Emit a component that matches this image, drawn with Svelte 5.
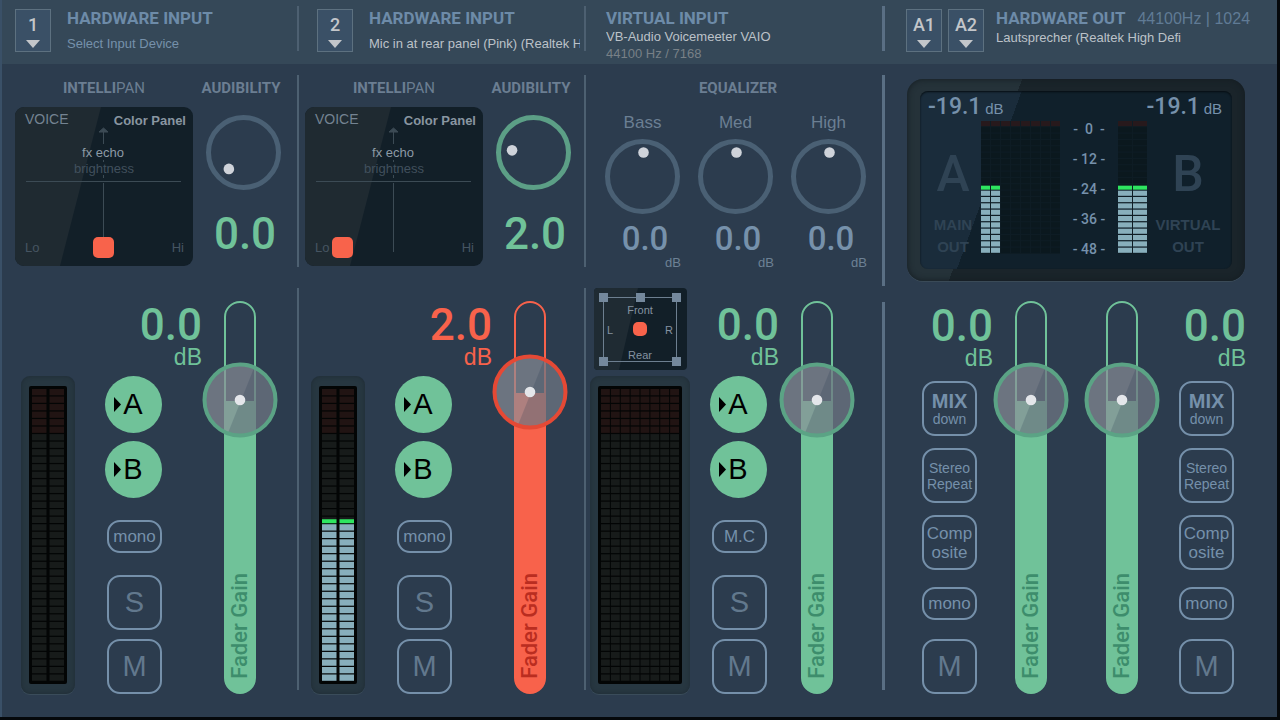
<script>
    const ROW_COUNT = 39;
    const OUT_ROW_COUNT = 21;

    let inputs = $state([
        { id: 1, device: 'Select Input Device', empty: true, audibility: 0, pan_x: 88, gain: 0, peak: -1 },
        { id: 2, device: 'Mic in at rear panel (Pink) (Realtek High Definition Audio)', empty: false, audibility: 2, pan_x: 37, gain: 2, peak: 17 },
    ]);

    let equalizer = $state([
        { name: 'Bass', value: 0 },
        { name: 'Med', value: 0 },
        { name: 'High', value: 0 },
    ]);

    let virtual_input = $state({ gain: 0 });
    let outputs = $state([{ gain: 0 }, { gain: 0 }]);

    const scale = ['-  0  -', '- 12 -', '- 24 -', '- 36 -', '- 48 -'];

    function knob_dot(angle) {
        const rad = (angle * Math.PI) / 180;
        return { x: 38.5 + 22.5 * Math.sin(rad), y: 37 - 23.5 * Math.cos(rad) };
    }

    function fader_top(gain) {
        return 99 - gain * 4;
    }

    function cell_color(row, col, red_rows, peak, lit_cols, dim) {
        if (peak >= 0 && row > peak && col < lit_cols) return '#88afbc';
        if (row < red_rows) return dim ? '#27191c' : '#211413';
        return dim ? '#0b181e' : '#171b1a';
    }
</script>

{#snippet meter(cols, rows, width, height, gap, red_rows, peak, lit_cols, dim)}
    {@const cell_w = (width + gap) / cols}
    {@const cell_h = height / rows}
    <svg class="cells" {width} {height} viewBox="0 0 {width} {height}" aria-hidden="true">
        {#each Array(rows) as _, row}
            {#each Array(cols) as _, col}
                <rect
                    x={col * cell_w}
                    y={row * cell_h}
                    width={cell_w - gap}
                    height={cell_h - 1.2}
                    fill={cell_color(row, col, red_rows, peak, lit_cols, dim)}
                />
                {#if row === peak && col < lit_cols}
                    <rect x={col * cell_w} y={(row + 1) * cell_h - 5} width={cell_w - gap} height="4" fill="#2ee660" />
                {/if}
            {/each}
        {/each}
    </svg>
{/snippet}

{#snippet knob(name, value, angle, min, max, set_value)}
    {@const dot = knob_dot(angle)}
    <div class="knob" class:active={value > 0}>
        <svg width="75" height="75" viewBox="0 0 75 75" aria-hidden="true">
            <circle class="ring" cx="37.5" cy="37.5" r="35" />
            <circle cx={dot.x} cy={dot.y} r="5.3" fill="#cfd3da" />
        </svg>
        <input type="range" aria-label={name} {min} {max} step="0.1" {value} oninput={(e) => set_value(+e.target.value)} />
    </div>
{/snippet}

{#snippet fader(strip, name)}
    {@const top = fader_top(strip.gain)}
    <div class="fader" class:hot={strip.gain > 0}>
        <div class="track" style="--level: {top + 1}px">
            <span class="fader-text">Fader Gain</span>
        </div>
        <svg class="handle" style="top: {top}px" width="76" height="76" viewBox="0 0 76 76" aria-hidden="true">
            <circle cx="38" cy="38" r="35" fill="#8b8f98" fill-opacity="0.68" />
            <path d="M52 6 A35 35 0 0 1 26 71 Z" fill="#24384a" fill-opacity="0.2" />
            <circle class="handle-ring" cx="38" cy="38" r="35.5" />
            <circle cx="38" cy="38" r="5.3" fill="#e4e6ea" />
        </svg>
        <input class="fader-input" type="range" aria-label={name} min="-60" max="12" step="0.1" bind:value={strip.gain} />
    </div>
{/snippet}

{#snippet readout(gain)}
    <div class="readout" class:hot={gain > 0}>
        <div class="gain">{gain.toFixed(1)}</div>
        <div class="unit">dB</div>
    </div>
{/snippet}

{#snippet slot_button(text)}
    <button class="slot">
        {text}
        <svg width="14" height="8" viewBox="0 0 14 8" aria-hidden="true"><path d="M0 0H14L7 8Z" fill="#c3c6ca" /></svg>
    </button>
{/snippet}

{#snippet routing(third)}
    {#each ['A', 'B'] as bus}
        <button class="bus">
            <svg width="7" height="15" viewBox="0 0 7 15" aria-hidden="true"><path d="M0 0L7 7.5L0 15Z" /></svg>{bus}
        </button>
    {/each}
    <button class="pill">{third}</button>
    <button class="square letter">S</button>
    <button class="square letter">M</button>
{/snippet}

{#snippet output_buttons()}
    <button class="square mix"><b>MIX</b>down</button>
    <button class="square stereo">Stereo<br />Repeat</button>
    <button class="square composite">Comp<br />osite</button>
    <button class="pill">mono</button>
    <button class="square letter">M</button>
{/snippet}

<main class="mixer">
    {#each inputs as input (input.id)}
        <section class="strip hardware">
            <header class="head">
                {@render slot_button(input.id)}
                <div class="head-text">
                    <h2>HARDWARE INPUT</h2>
                    <button class="device" class:empty={input.empty}>{input.device}</button>
                </div>
            </header>

            <div class="upper">
                <div class="pan">
                    <h3>INTELLI<span>PAN</span></h3>
                    <svg class="pad" width="178" height="159" viewBox="0 0 178 159">
                        <rect width="178" height="159" rx="9" fill="#121f28" />
                        <path d="M9 0H86L45 159H9A9 9 0 0 1 0 150V9A9 9 0 0 1 9 0Z" fill="#1f2a31" />
                        <g stroke="#3c4b55" fill="none">
                            <path d="M11 74.5H166M88.5 23V37M88.5 53V55M88.5 68V71M88.5 76V145" />
                            <path d="M84 25L88.5 21L93 25Z" fill="#3c4b55" />
                        </g>
                        <text x="10" y="17" font-size="14" fill="#748391">VOICE</text>
                        <text x="171" y="18" font-size="13" font-weight="bold" text-anchor="end" fill="#8996a1">Color Panel</text>
                        <text x="88" y="50" font-size="13" text-anchor="middle" fill="#8c9aa5">fx echo</text>
                        <text x="89" y="66" font-size="13" text-anchor="middle" fill="#41505d">brightness</text>
                        <text x="10" y="145" font-size="13" fill="#465562">Lo</text>
                        <text x="169" y="145" font-size="13" text-anchor="end" fill="#465562">Hi</text>
                        <rect x={input.pan_x - 10} y="130" width="21" height="21" rx="5" fill="#f8634b" />
                    </svg>
                </div>
                <div class="audibility">
                    <h3>AUDIBILITY</h3>
                    {@render knob('Audibility', input.audibility, -136 + input.audibility * 25, 0, 10, (v) => (input.audibility = v))}
                    <div class="audibility-value">{input.audibility.toFixed(1)}</div>
                </div>
            </div>

            <div class="lower">
                <div class="meter">
                    <div class="meter-screen">
                        {@render meter(2, ROW_COUNT, 32, 293, 3, 6, input.peak, 2, false)}
                    </div>
                </div>
                <div class="controls">
                    {@render readout(input.gain)}
                    {@render routing('mono')}
                </div>
                {@render fader(input, 'Input gain')}
            </div>
        </section>
    {/each}

    <section class="strip virtual">
        <header class="head">
            <div class="head-text">
                <h2>VIRTUAL INPUT</h2>
                <p class="device">VB-Audio Voicemeeter VAIO</p>
                <p class="rate">44100 Hz / 7168</p>
            </div>
        </header>

        <div class="upper eq">
            <h3>EQUALIZER</h3>
            <div class="bands">
                {#each equalizer as band}
                    <div class="band">
                        <span class="band-name">{band.name}</span>
                        {@render knob(band.name, band.value, band.value * 11, -12, 12, (v) => (band.value = v))}
                        <div class="band-value">{band.value.toFixed(1)}</div>
                        <div class="band-unit">dB</div>
                    </div>
                {/each}
            </div>
        </div>

        <div class="lower">
            <div class="surround">
                <svg class="surround-pad" width="93" height="82" viewBox="0 0 93 82">
                    <rect width="93" height="82" rx="4" fill="#121f28" />
                    <path d="M4 0H44L25 82H4A4 4 0 0 1 0 78V4A4 4 0 0 1 4 0Z" fill="#1f2b33" />
                    <rect x="9.5" y="9.5" width="73" height="64" fill="none" stroke="#6d7f90" />
                    <path d="M5 5h9v9h-9zM42 5h9v9h-9zM78 5h9v9h-9zM5 69h9v9h-9zM78 69h9v9h-9z" fill="#74889c" />
                    <g font-size="11" fill="#8492a0" text-anchor="middle">
                        <text x="46" y="26">Front</text>
                        <text x="16" y="46">L</text>
                        <text x="75" y="46">R</text>
                        <text x="46" y="71">Rear</text>
                    </g>
                    <rect x="39" y="34" width="14" height="14" rx="5" fill="#f8634b" />
                </svg>
                <div class="meter wide">
                    <div class="meter-screen">
                        {@render meter(8, ROW_COUNT, 78, 293, 1, 6, -1, 0, false)}
                    </div>
                </div>
            </div>
            <div class="controls">
                {@render readout(virtual_input.gain)}
                {@render routing('M.C')}
            </div>
            {@render fader(virtual_input, 'Virtual input gain')}
        </div>
    </section>

    <section class="strip out">
        <header class="head">
            {@render slot_button('A1')}
            {@render slot_button('A2')}
            <div class="head-text">
                <h2>HARDWARE OUT <span>44100Hz | 1024</span></h2>
                <button class="device">Lautsprecher (Realtek High Defi</button>
            </div>
        </header>

        <div class="display">
            <div class="screen">
                <div class="levels">
                    <div>-19.1 <small>dB</small></div>
                    <div>-19.1 <small>dB</small></div>
                </div>
                <div class="busses">
                    <div class="bus-name"><strong>A</strong>MAIN<br />OUT</div>
                    {@render meter(8, OUT_ROW_COUNT, 79, 133, 1, 1, 10, 2, true)}
                    <div class="scale">
                        {#each scale as mark}<div>{mark}</div>{/each}
                    </div>
                    {@render meter(2, OUT_ROW_COUNT, 29, 133, 1, 1, 10, 2, true)}
                    <div class="bus-name"><strong>B</strong>VIRTUAL<br />OUT</div>
                </div>
            </div>
        </div>

        <div class="lower">
            <div class="controls">
                {@render readout(outputs[0].gain)}
                {@render output_buttons()}
            </div>
            {@render fader(outputs[0], 'Main out gain')}
            {@render fader(outputs[1], 'Virtual out gain')}
            <div class="controls right">
                {@render readout(outputs[1].gain)}
                {@render output_buttons()}
            </div>
        </div>
    </section>
</main>

<style>
    :global(body) {
        margin: 0;
        background: #05080b;
    }

    .mixer {
        --green: #70c299;
        --red: #f8624b;
        --blue: #7691ab;
        display: grid;
        grid-template-columns: 299fr 287fr 299fr 392fr;
        min-width: 1200px;
        margin: 0 3px 3px 0;
        background: linear-gradient(#354858 0 64px, #2c3c4e 64px);
        box-shadow: inset 2px 0 #3a5067;
        font-family: 'Liberation Sans', Arial, sans-serif;
        color: var(--blue);
    }

    .strip {
        position: relative;
        min-width: 0;
        padding-left: 15px;
    }

    .strip:nth-child(2) {
        padding-left: 6px;
    }

    .strip:not(.out)::after {
        content: '';
        position: absolute;
        top: 0;
        bottom: 0;
        right: 0;
        width: 2px;
        background: linear-gradient(
            transparent 6px,
            #4d6071 6px 51px,
            transparent 51px 75px,
            #4d6071 75px 267px,
            transparent 267px 288px,
            #4d6071 288px 690px,
            transparent 690px
        );
    }

    .strip.virtual::after {
        width: 3px;
        background: linear-gradient(
            transparent 6px,
            #5a6f84 6px 51px,
            transparent 51px 75px,
            #5a6f84 75px 286px,
            transparent 286px 302px,
            #5a6f84 302px 690px,
            transparent 690px
        );
    }

    button {
        padding: 0;
        border: 0;
        background: none;
        color: inherit;
        font-family: inherit;
        cursor: pointer;
    }

    h2,
    h3,
    p {
        margin: 0;
    }

    h2 {
        font: bold 17px/20px Roboto, sans-serif;
        color: #6d8ba8;
        white-space: nowrap;
    }

    h2 span {
        margin-left: 8px;
        font: 16px/20px 'Liberation Sans', Arial, sans-serif;
        color: #607b95;
    }

    h3 {
        font: bold 15px/20px Roboto, sans-serif;
        color: #6b7e92;
        text-align: center;
    }

    h3 span {
        font-weight: 400;
    }

    /* header */
    .head {
        display: flex;
        gap: 6px;
        height: 55px;
        padding-top: 9px;
    }

    .hardware .head {
        gap: 16px;
    }

    .strip:nth-child(2) .head {
        padding-left: 12px;
    }

    .slot {
        display: flex;
        flex-direction: column;
        align-items: center;
        gap: 3px;
        flex: none;
        box-sizing: border-box;
        width: 36px;
        height: 43px;
        padding-top: 3px;
        border: 1px solid #5d7180;
        background: #3a5066;
        font: 500 18px/24px Roboto, sans-serif;
        color: #c3c6ca;
    }

    .head-text {
        min-width: 0;
        margin: -1px 6px 0 0;
    }

    .device {
        display: block;
        max-width: 100%;
        overflow: hidden;
        font-size: 13px;
        line-height: 18px;
        color: #bcc2c8;
        text-align: left;
        white-space: nowrap;
    }

    .hardware .device {
        margin-top: 7px;
    }

    .device.empty {
        color: #7691ab;
    }

    .rate {
        font-size: 13px;
        line-height: 16px;
        color: #788087;
    }

    /* upper part */
    .upper {
        display: flex;
        gap: 8px;
        height: 208px;
        padding-top: 14px;
    }

    .pad,
    .surround-pad,
    .cells,
    .knob svg {
        display: block;
    }

    .pad {
        margin-top: 9px;
    }

    .audibility {
        display: flex;
        flex-direction: column;
        align-items: center;
        width: 84px;
    }

    .audibility h3 {
        margin-right: 4px;
    }

    .audibility .knob {
        margin-top: 17px;
    }

    .audibility-value,
    .gain {
        font: 500 44px/48px Roboto, sans-serif;
        color: var(--green);
    }

    .audibility-value {
        margin: 20px 0 0 4px;
    }

    .knob {
        position: relative;
        width: 75px;
        height: 75px;
    }

    .ring {
        fill: none;
        stroke: #4a6074;
        stroke-width: 5;
    }

    .knob.active .ring {
        stroke: #5c9f86;
    }

    .knob input,
    .fader-input {
        position: absolute;
        inset: 0;
        width: 100%;
        height: 100%;
        margin: 0;
        opacity: 0;
        cursor: pointer;
    }

    .virtual {
        padding-left: 0;
    }

    .virtual .head {
        padding-left: 20px;
    }

    .eq {
        flex-direction: column;
    }

    .eq h3 {
        padding-left: 5px;
    }

    .bands {
        display: flex;
        gap: 18px;
        padding-left: 19px;
        margin-top: 6px;
    }

    .band {
        display: flex;
        flex-direction: column;
        align-items: center;
        width: 75px;
    }

    .band-name {
        font-size: 17px;
        line-height: 22px;
        color: #6b7f93;
    }

    .band .knob {
        margin-top: 5px;
    }

    .band-value {
        margin: 7px 0 0 5px;
        font: 500 33px/36px Roboto, sans-serif;
    }

    .band-unit {
        align-self: flex-end;
        margin-right: -1px;
        font-size: 13px;
        line-height: 12px;
        color: #6d8195;
    }

    /* lower part */
    .lower {
        display: flex;
        align-items: flex-end;
        height: 408px;
        padding-bottom: 23px;
    }

    .meter {
        box-sizing: border-box;
        width: 54px;
        height: 318px;
        margin-left: 6px;
        padding: 10px 8px;
        border-radius: 9px;
        background: #273741;
        box-shadow: inset 0 0 4px #1f2b34, 0 1px #3a4c5a;
    }

    .meter-screen {
        display: flex;
        justify-content: center;
        height: 295px;
        padding-top: 3px;
        border-radius: 2px;
        background: #030505;
    }

    .meter.wide {
        width: 100px;
        margin: 6px 0 0;
    }

    .surround {
        margin-left: 4px;
    }

    .surround-pad {
        margin-left: 4px;
    }

    .controls {
        --inset: 40px;
        display: flex;
        flex-direction: column;
        align-items: flex-end;
        width: 127px;
        padding-right: 1px;
    }

    .controls > button {
        margin-right: var(--inset);
    }

    .virtual .controls {
        --inset: 12px;
        width: 89px;
    }

    .readout {
        height: 75px;
        text-align: right;
        color: var(--green);
    }

    .gain {
        color: inherit;
    }

    .unit {
        font-size: 23px;
        line-height: 16px;
    }

    .hot {
        color: var(--red);
    }

    .bus {
        display: flex;
        align-items: center;
        justify-content: center;
        gap: 2px;
        box-sizing: border-box;
        width: 57px;
        height: 57px;
        margin-bottom: 8px;
        padding-right: 10px;
        border-radius: 50%;
        background: var(--green);
        font-size: 29px;
        color: #000;
    }

    .pill,
    .square {
        box-sizing: border-box;
        width: 55px;
        border: 2px solid #7590aa;
        border-radius: 13px;
        color: #7590aa;
    }

    .pill {
        height: 33px;
        margin-top: 14px;
        font-size: 17px;
        line-height: 26px;
    }

    .square {
        height: 55px;
        margin-top: 9px;
    }

    .pill + .square {
        margin-top: 22px;
    }

    .letter {
        font-size: 29px;
        color: #62788d;
    }

    .fader {
        --tone: var(--green);
        --ring: #5ba385;
        --label: #3d8d6c;
        position: relative;
        width: 74px;
        height: 393px;
    }

    .fader.hot {
        --tone: var(--red);
        --ring: #e54935;
        --label: #ba2d20;
    }

    .track {
        display: flex;
        align-items: flex-end;
        justify-content: center;
        box-sizing: border-box;
        width: 32px;
        height: 100%;
        margin: 0 auto;
        padding-bottom: 13px;
        border: 2px solid var(--tone);
        border-radius: 16px;
        background: linear-gradient(transparent var(--level), var(--tone) var(--level)) border-box;
    }

    .fader-text {
        font: 500 22px/24px Roboto, sans-serif;
        color: var(--label);
        writing-mode: vertical-rl;
        transform: rotate(180deg);
    }

    .handle {
        position: absolute;
        left: -1px;
        margin-top: -38px;
    }

    .handle-ring {
        fill: none;
        stroke: var(--ring);
        stroke-width: 4;
    }

    .fader-input {
        writing-mode: vertical-lr;
        direction: rtl;
    }

    /* outputs */
    .out {
        padding-left: 21px;
    }

    .out .head-text {
        margin-left: 6px;
    }

    .display {
        box-sizing: border-box;
        max-width: 338px;
        height: 202px;
        margin: 15px 0 5px 1px;
        padding: 12px 13px;
        border-radius: 16px;
        background: linear-gradient(110deg, #253239 0 28%, #1a242a 28%);
        box-shadow: inset 0 0 6px #141c21, 0 1px #3a4a57;
    }

    .screen {
        height: 178px;
        border-radius: 8px;
        background: linear-gradient(110deg, #1a2c3b 0 27%, #10202b 27%);
        box-shadow: inset 0 1px 2px #060d12;
    }

    .levels {
        display: flex;
        justify-content: space-between;
        padding: 5px 10px 0 8px;
        font: 500 23px/22px Roboto, sans-serif;
    }

    .levels small {
        margin-left: -2px;
        font: 15px/22px 'Liberation Sans', Arial, sans-serif;
    }

    .busses {
        display: grid;
        grid-template-columns: 56px 79px 58px 29px 1fr;
        padding: 1px 3px 0 5px;
    }

    .busses .cells {
        background: #0e1c24;
    }

    .bus-name {
        padding-top: 26px;
        font-weight: bold;
        font-size: 15px;
        line-height: 22px;
        color: #2f4354;
        text-align: center;
    }

    .bus-name strong {
        display: block;
        margin-bottom: 13px;
        font: 500 50px/54px Roboto, sans-serif;
    }

    .scale {
        margin-top: -7px;
        font: 500 14px/30px Roboto, sans-serif;
        text-align: center;
        white-space: pre;
    }

    .out .controls {
        --inset: 16px;
        width: 87px;
    }

    .out .fader + .fader {
        margin-left: 17px;
    }

    .out .controls.right {
        --inset: 12px;
    }

    .out .square {
        margin-top: 12px;
    }

    .out .square:nth-of-type(1) {
        margin-top: 4px;
    }

    .out .pill {
        margin-top: 17px;
    }

    .out .pill + .square {
        margin-top: 19px;
    }

    .mix {
        font-size: 14px;
        line-height: 16px;
    }

    .mix b {
        display: block;
        font-size: 20px;
        line-height: 20px;
    }

    .stereo {
        font-size: 14px;
        line-height: 16px;
    }

    .composite {
        font-size: 17px;
        line-height: 19px;
    }
</style>
